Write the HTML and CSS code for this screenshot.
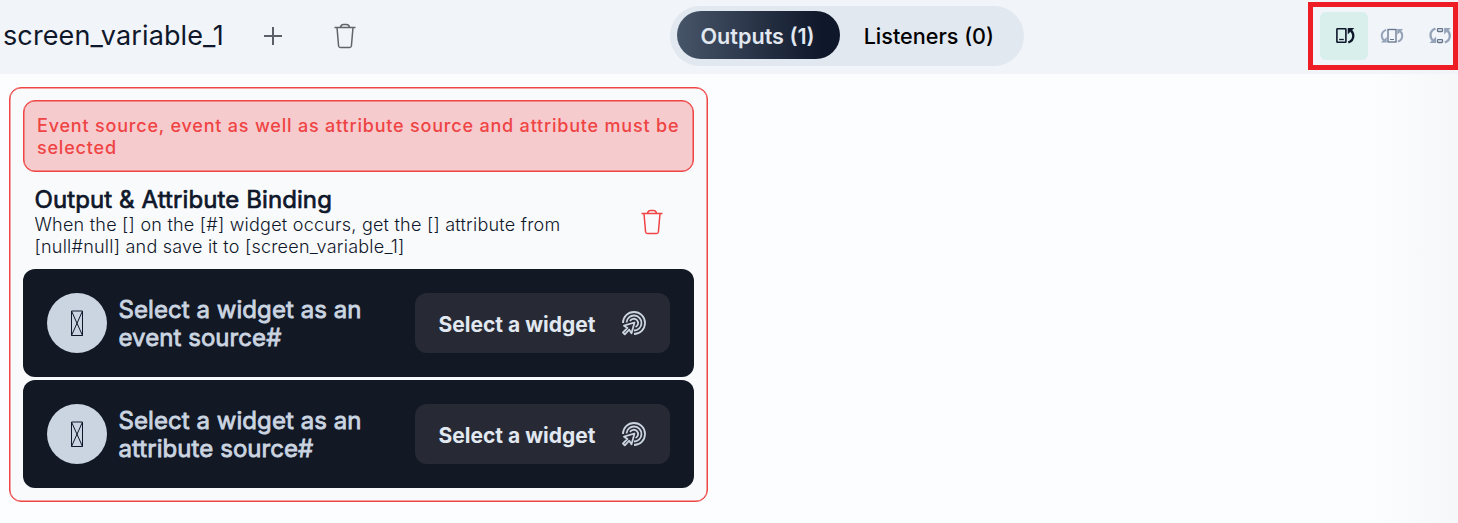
FILE: index.html
```html
<!DOCTYPE html>
<html lang="en">
<head>
<meta charset="utf-8">
<title>screen_variable_1</title>
<link rel="stylesheet" href="styles.css">
</head>
<body>
<svg class="defs" width="0" height="0" aria-hidden="true">
  <symbol id="trash" viewBox="0 0 24 28"><path d="M1.500 5.500h21M4 5.500l1.600 18.500q.2 1.500 1.800 1.500h9.200q1.600 0 1.800-1.500L20 5.500M7.500 5q.7-2.500 3-2.500h3q2.300 0 3 2.500" fill="none" stroke="currentColor" stroke-width="1.500"/></symbol>
  <symbol id="target" viewBox="0 0 26 26"><g fill="none" stroke="currentColor" stroke-width="1.800"><path d="M2 13A11 11 0 1 1 13 24"/><path d="M5.500 12.500A7.500 7.500 0 1 1 13 20.500"/><path d="M9 11A4.300 4.300 0 1 1 14.500 17"/><path d="M13.500 12.500L3 15.700l3.500 2.200-4.500 4.600 1.800 1.800 4.400-4.600 2.300 3.600z" stroke-linejoin="round"/></g></symbol>
  <symbol id="arc-up" viewBox="0 0 8 17"><path d="M1 15.500Q6 13.500 6 9 6 5.500 3.500 3.500" fill="none" stroke="currentColor" stroke-width="2.300"/><path d="M.3 1H7L.3 7.500z" fill="currentColor"/></symbol>
</svg>
<header class="topbar">
  <div class="variable">
    <h1 class="variable-name">screen_variable_1</h1>
    <svg class="plus" viewBox="0 0 20 20"><path d="M1 10h18M10 1v18" stroke="currentColor" stroke-width="2"/></svg>
    <svg class="trash"><use href="#trash"/></svg>
  </div>
  <nav class="tabs">
    <span class="tab tab-active">Outputs (1)</span>
    <span class="tab">Listeners (0)</span>
  </nav>
  <div class="modes">
    <span class="mode mode-active"><svg viewBox="0 0 24 20"><rect x="4.900" y="2.700" width="9" height="13.600" rx=".6" fill="none" stroke="currentColor" stroke-width="1.600"/><path d="M7.200 13.500h4.600" stroke="currentColor" stroke-width="1.300"/><use href="#arc-up" x="15.300" y="1" width="8" height="17"/></svg></span>
    <span class="mode"><svg viewBox="0 0 24 20"><rect x="8" y="3.500" width="8" height="12.500" fill="none" stroke="currentColor" stroke-width="1.300"/><path d="M10 13.500h4" stroke="currentColor"/><use class="arc" href="#arc-up" x="17" y="2" width="7" height="15"/><use class="arc" href="#arc-up" x="-7" y="-17.500" width="7" height="15" transform="rotate(180)"/></svg></span>
    <span class="mode"><svg viewBox="0 0 24 20"><rect x="9.500" y="2.700" width="5" height="2.800" rx=".7" fill="none" stroke="currentColor" stroke-width="1.300"/><rect x="9.500" y="13.700" width="5" height="2.800" rx=".7" fill="none" stroke="currentColor" stroke-width="1.300"/><use class="arc" href="#arc-up" x="15.800" y="1" width="8" height="17"/><use class="arc" href="#arc-up" x="-8.500" y="-18" width="8" height="17" transform="rotate(180)"/></svg></span>
  </div>
</header>
<main class="content">
  <section class="card">
    <p class="alert">Event source, event as well as attribute source and attribute must be<br>selected</p>
    <div class="binding">
      <div>
        <h2 class="binding-title">Output &amp; Attribute Binding</h2>
        <p class="binding-text">When the [] on the [#] widget occurs, get the [] attribute from<br>[null#null] and save it to [screen_variable_1]</p>
      </div>
      <svg class="trash trash-red"><use href="#trash"/></svg>
    </div>
    <div class="source">
      <span class="avatar"><svg viewBox="0 0 14 27"><path d="M1.500 1h11v24.500h-11zM1.500 1l11 24.500M12.500 1l-11 24.500" fill="none" stroke="currentColor"/></svg></span>
      <h3 class="source-title">Select a widget as an<br>event source#</h3>
      <span class="pick"><span class="pick-label">Select a widget</span><svg class="target"><use href="#target"/></svg></span>
    </div>
    <div class="source">
      <span class="avatar"><svg viewBox="0 0 14 27"><path d="M1.500 1h11v24.500h-11zM1.500 1l11 24.500M12.500 1l-11 24.500" fill="none" stroke="currentColor"/></svg></span>
      <h3 class="source-title">Select a widget as an<br>attribute source#</h3>
      <span class="pick"><span class="pick-label">Select a widget</span><svg class="target"><use href="#target"/></svg></span>
    </div>
  </section>
</main>
</body>
</html>
```
FILE: styles.css
```css
* { box-sizing: border-box; }
body {
  margin: 0;
  height: 523px;
  overflow: hidden;
  display: flex;
  flex-direction: column;
  font-family: Inter, "Liberation Sans", sans-serif;
  color: #0f172a;
  background: linear-gradient(90deg, #fcfdff 0, #fcfdff 1370px, #f6f7f9 1458px);
}
h1, h2, h3, p { margin: 0; font-weight: 400; }
svg { display: block; flex: none; }
.defs { position: absolute; }
.topbar {
  flex: none;
  height: 74px;
  display: grid;
  grid-template-columns: 670px 354px 1fr;
  align-items: start;
  background: #f1f4f9;
}
.variable { display: flex; align-items: center; height: 72px; padding-left: 3px; }
.variable-name { width: 260px; padding-bottom: 2px; font-size: 27px; letter-spacing: .12px; white-space: nowrap; }
.plus { width: 20px; height: 20px; margin-right: 50px; color: #5b5f67; }
.trash { width: 24px; height: 28px; color: #60646b; }
.tabs {
  display: flex;
  align-items: center;
  height: 60px;
  margin-top: 5.500px;
  padding: 0 6px 1px 6.500px;
  border-radius: 30px;
  background: #e2e8f0;
}
.tab {
  height: 48px;
  padding: 0 24px;
  border-radius: 24px;
  font-size: 21.600px;
  font-weight: 500;
  line-height: 51px;
  white-space: nowrap;
  color: #000;
}
.tab-active {
  width: 163.500px;
  font-weight: 600;
  color: #e2e8f0;
  background: linear-gradient(90deg, #475569, #0f172a 90%);
}
.modes {
  justify-self: end;
  display: flex;
  width: 150px;
  height: 68px;
  margin-top: 2px;
  padding: 5px 0 0 7px;
  overflow: hidden;
  border: 5px solid #ee1c25;
}
.mode {
  flex: none;
  width: 48px;
  height: 48px;
  display: grid;
  place-items: center;
  border-radius: 6px;
  color: #64748b;
}
.mode svg { width: 24px; height: 20px; }
.mode .arc { color: #94a3b8; }
.mode-active { color: #0f172a; background: #d8efec; }
.content { padding: 13px 0 0 9px; }
.card {
  width: 698.500px;
  height: 415px;
  padding: 12px 12.500px;
  border: 1px solid #ef4444;
  box-shadow: inset 0 0 0 .5px #ef4444;
  border-radius: 12px;
  background: #f9fafc;
}
.alert {
  height: 72px;
  padding: 14px 13.500px;
  border: 1px solid #ef4444;
  box-shadow: inset 0 0 0 .5px #ef4444;
  border-radius: 12px;
  background: #f6cbce;
  color: #ef4444;
  font-size: 18px;
  font-weight: 500;
  line-height: 22px;
  letter-spacing: .800px;
  white-space: nowrap;
}
.binding {
  display: flex;
  align-items: center;
  justify-content: space-between;
  height: 97.400px;
  padding: 2.600px 30px 0 12px;
}
.binding-title {
  font-size: 24px;
  line-height: 28px;
  letter-spacing: .1px;
  -webkit-text-stroke: .7px currentColor;
}
.binding-text { font-size: 18px; font-weight: 300; line-height: 22px; white-space: nowrap; letter-spacing: .23px; }
.trash-red { color: #ef4444; }
.source {
  display: flex;
  align-items: center;
  height: 108px;
  padding: 0 24px;
  border-radius: 12px;
  background: #121924;
}
.source + .source { margin-top: 3px; }
.avatar {
  flex: none;
  display: grid;
  place-items: center;
  width: 60px;
  height: 60px;
  border-radius: 50%;
  background: #cbd5e1;
}
.avatar svg { width: 14px; height: 27px; }
.source-title {
  flex: 1;
  margin-left: 12px;
  padding-top: 1px;
  font-size: 24px;
  line-height: 28px;
  letter-spacing: .06px;
  color: #cbd5e1;
  -webkit-text-stroke: .8px currentColor;
  white-space: nowrap;
}
.pick {
  flex: none;
  display: flex;
  align-items: center;
  justify-content: space-between;
  width: 255px;
  height: 60px;
  padding: 0 23.500px;
  border-radius: 12px;
  background: #272a35;
  color: #e2e8f0;
  font-size: 21px;
  font-weight: 700;
  white-space: nowrap;
}
.pick-label { padding-top: 2px; }
.target { width: 26px; height: 26px; color: #cbd5e1; }
```
